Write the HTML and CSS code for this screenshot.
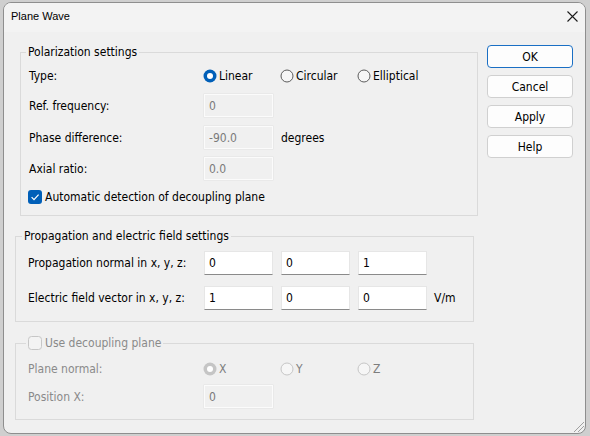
FILE: index.html
```html
<!DOCTYPE html>
<html>
<head>
<meta charset="utf-8">
<link rel="stylesheet" href="styles.css">
</head>
<body>
<div class="window">
  <div class="titlebar">
    <span class="title">Plane Wave</span>
    <svg class="close" width="11" height="11" viewBox="0 0 11 11"><path d="M0.5 0.5 L10.5 10.5 M10.5 0.5 L0.5 10.5" stroke="#1b1b1b" stroke-width="1.1" fill="none"/></svg>
  </div>
  <div class="content">
    <div class="groups">
      <fieldset class="group g1">
        <legend>Polarization settings</legend>
        <div class="row r-type">
          <span class="label">Type:</span>
          <div class="radios">
            <span class="ritem"><svg class="radio" width="14" height="14" viewBox="0 0 14 14"><circle cx="7" cy="7" r="6.5" fill="#005fb8"/><circle cx="7" cy="7" r="3" fill="#fff"/></svg>Linear</span>
            <span class="ritem"><svg class="radio" width="14" height="14" viewBox="0 0 14 14"><circle cx="7" cy="7" r="6" fill="#f6f6f6" stroke="#5c5c5c" stroke-width="1"/></svg>Circular</span>
            <span class="ritem"><svg class="radio" width="14" height="14" viewBox="0 0 14 14"><circle cx="7" cy="7" r="6" fill="#f6f6f6" stroke="#5c5c5c" stroke-width="1"/></svg>Elliptical</span>
          </div>
        </div>
        <div class="row r-ref">
          <span class="label">Ref. frequency:</span>
          <input class="field disabled" value="0" disabled>
        </div>
        <div class="row r-phase">
          <span class="label">Phase difference:</span>
          <input class="field disabled" value="-90.0" disabled>
          <span class="unit">degrees</span>
        </div>
        <div class="row r-axial">
          <span class="label">Axial ratio:</span>
          <input class="field disabled" value="0.0" disabled>
        </div>
        <div class="row r-check">
          <svg class="check" width="14" height="14" viewBox="0 0 14 14"><rect x="0" y="0" width="14" height="14" rx="3" fill="#005fb8"/><path d="M3.6 7.2 L6 9.6 L10.6 4.6" stroke="#fff" stroke-width="1.2" fill="none"/></svg>
          <span>Automatic detection of decoupling plane</span>
        </div>
      </fieldset>

      <fieldset class="group g2">
        <legend>Propagation and electric field settings</legend>
        <div class="row r-prop">
          <span class="label">Propagation normal in x, y, z:</span>
          <div class="fields">
            <input class="field" value="0">
            <input class="field" value="0">
            <input class="field" value="1">
          </div>
        </div>
        <div class="row r-elec">
          <span class="label">Electric field vector in x, y, z:</span>
          <div class="fields">
            <input class="field" value="1">
            <input class="field" value="0">
            <input class="field" value="0">
          </div>
          <span class="unit">V/m</span>
        </div>
      </fieldset>

      <fieldset class="group g3">
        <legend><svg class="check" width="14" height="14" viewBox="0 0 14 14"><rect x="0.5" y="0.5" width="13" height="13" rx="3" fill="#f3f3f3" stroke="#c6c6c6"/></svg><span>Use decoupling plane</span></legend>
        <div class="row r-plane">
          <span class="label">Plane normal:</span>
          <div class="radios">
            <span class="ritem"><svg class="radio" width="14" height="14" viewBox="0 0 14 14"><circle cx="7" cy="7" r="6.5" fill="#c5c5c5"/><circle cx="7" cy="7" r="3" fill="#fff"/></svg>X</span>
            <span class="ritem"><svg class="radio" width="14" height="14" viewBox="0 0 14 14"><circle cx="7" cy="7" r="6" fill="#f6f6f6" stroke="#c6c6c6" stroke-width="1"/></svg>Y</span>
            <span class="ritem"><svg class="radio" width="14" height="14" viewBox="0 0 14 14"><circle cx="7" cy="7" r="6" fill="#f6f6f6" stroke="#c6c6c6" stroke-width="1"/></svg>Z</span>
          </div>
        </div>
        <div class="row r-pos">
          <span class="label">Position X:</span>
          <input class="field disabled" value="0" disabled>
        </div>
      </fieldset>
    </div>
    <div class="buttons">
      <button class="btn default">OK</button>
      <button class="btn">Cancel</button>
      <button class="btn">Apply</button>
      <button class="btn">Help</button>
    </div>
  </div>
  <svg class="grip" width="12" height="12" viewBox="0 0 12 12"><path d="M11 1 L1 11 M11 5 L5 11 M11 9 L9 11" stroke="#a0a0a0" stroke-width="1" fill="none"/></svg>
</div>
</body>
</html>
```

FILE: styles.css
```css
html, body {
  margin: 0;
  padding: 0;
}
body {
  background: #cfcfcf;
  width: 590px;
  height: 436px;
  overflow: hidden;
  font-family: "DejaVu Sans Condensed", "DejaVu Sans", sans-serif;
  font-stretch: condensed;
  font-size: 12px;
  color: #000;
}
.window {
  position: relative;
  margin: 2px 0 0 3px;
  width: 583px;
  height: 432px;
  box-sizing: border-box;
  border: 1px solid #8e8e8e;
  border-radius: 8px;
  background: #f0f0f0;
  overflow: hidden;
}
.titlebar {
  height: 29px;
  background: #f3f3f3;
  display: flex;
  align-items: center;
  justify-content: space-between;
  padding: 0 7px 0 7px;
}
.title {
  font-family: "Liberation Sans", Arial, sans-serif;
  font-stretch: normal;
  font-size: 11px;
  color: #000;
  margin-top: -3px;
}
.close {
  display: block;
  margin-top: -2px;
}
.content {
  display: flex;
  align-items: flex-start;
}
.groups {
  width: 474px;
  display: flex;
  flex-direction: column;
}
.group {
  margin: 0;
  min-width: 0;
  box-sizing: border-box;
  border: 1px solid #dadada;
}
.group legend {
  line-height: 14px;
  font-size: 12px;
  padding: 0 2px;
}
.g1 {
  margin: 13px 0 0 16px;
  width: 458px;
  height: 171px;
  padding: 5px 8px 0 8px;
}
.g1 legend { margin-left: -3px; }
.g2 {
  margin: 13px 0 0 11px;
  width: 459px;
  height: 93px;
  padding: 8px 12px 0 12px;
}
.g2 legend { margin-left: -6px; }
.g3 {
  margin: 14px 0 0 11px;
  width: 459px;
  height: 84px;
  padding: 7px 12px 0 12px;
  color: #8a8a8a;
}
.g3 legend {
  margin-left: -2px;
  display: flex;
  align-items: center;
  gap: 3px;
  color: #8a8a8a;
}
.row {
  display: flex;
  align-items: center;
  height: 23px;
}
.g2 .row { height: 24px; }
.label {
  width: 175px;
  flex: none;
}
.g2 .label, .g3 .label { width: 176px; }
.r-ref { margin-top: 7px; }
.r-phase { margin-top: 9px; }
.r-axial { margin-top: 8px; }
.r-check {
  margin-top: 8px;
  height: 17px;
  gap: 3px;
}
.r-check .check { margin-left: -1px; }
.r-elec { margin-top: 11px; }
.r-pos { margin-top: 5px; }
.radios {
  display: flex;
  margin-left: -1px;
}
.ritem {
  width: 77px;
  display: flex;
  align-items: center;
  gap: 2px;
}
.radio { display: block; flex: none; }
.check { display: block; flex: none; }
.r-plane .ritem { color: #7d7d7d; }
.fields {
  display: flex;
  gap: 8px;
}
.field {
  box-sizing: border-box;
  width: 69px;
  height: 24px;
  margin: 0;
  padding: 0 0 0 4px;
  font-family: "DejaVu Sans Condensed", "DejaVu Sans", sans-serif;
  font-stretch: condensed;
  font-size: 12px;
  color: #000;
  background: #fff;
  border: 1px solid #e6e6e6;
  border-bottom: 1px solid #8a8a8a;
  border-radius: 0;
  outline: none;
}
.field.disabled {
  height: 23px;
  background: #f0f0f0;
  border: 1px solid #fbfbfb;
  box-shadow: 0 0 0 0.5px #e2e2e2;
  color: #7a7a7a;
  -webkit-text-fill-color: #7a7a7a;
  opacity: 1;
}
.unit {
  margin-left: 8px;
}
.r-elec .unit { margin-left: 7px; }
.buttons {
  margin: 13px 0 0 9px;
  display: flex;
  flex-direction: column;
  gap: 7px;
}
.btn {
  box-sizing: border-box;
  width: 86px;
  height: 23px;
  margin: 0;
  padding: 0;
  font-family: "DejaVu Sans Condensed", "DejaVu Sans", sans-serif;
  font-stretch: condensed;
  font-size: 12px;
  color: #000;
  background: #fdfdfd;
  border: 1px solid #d0d0d0;
  border-radius: 4px;
}
.btn.default {
  border-color: #1a6fc4;
}
.grip {
  position: absolute;
  right: 0;
  bottom: 0;
}
```
